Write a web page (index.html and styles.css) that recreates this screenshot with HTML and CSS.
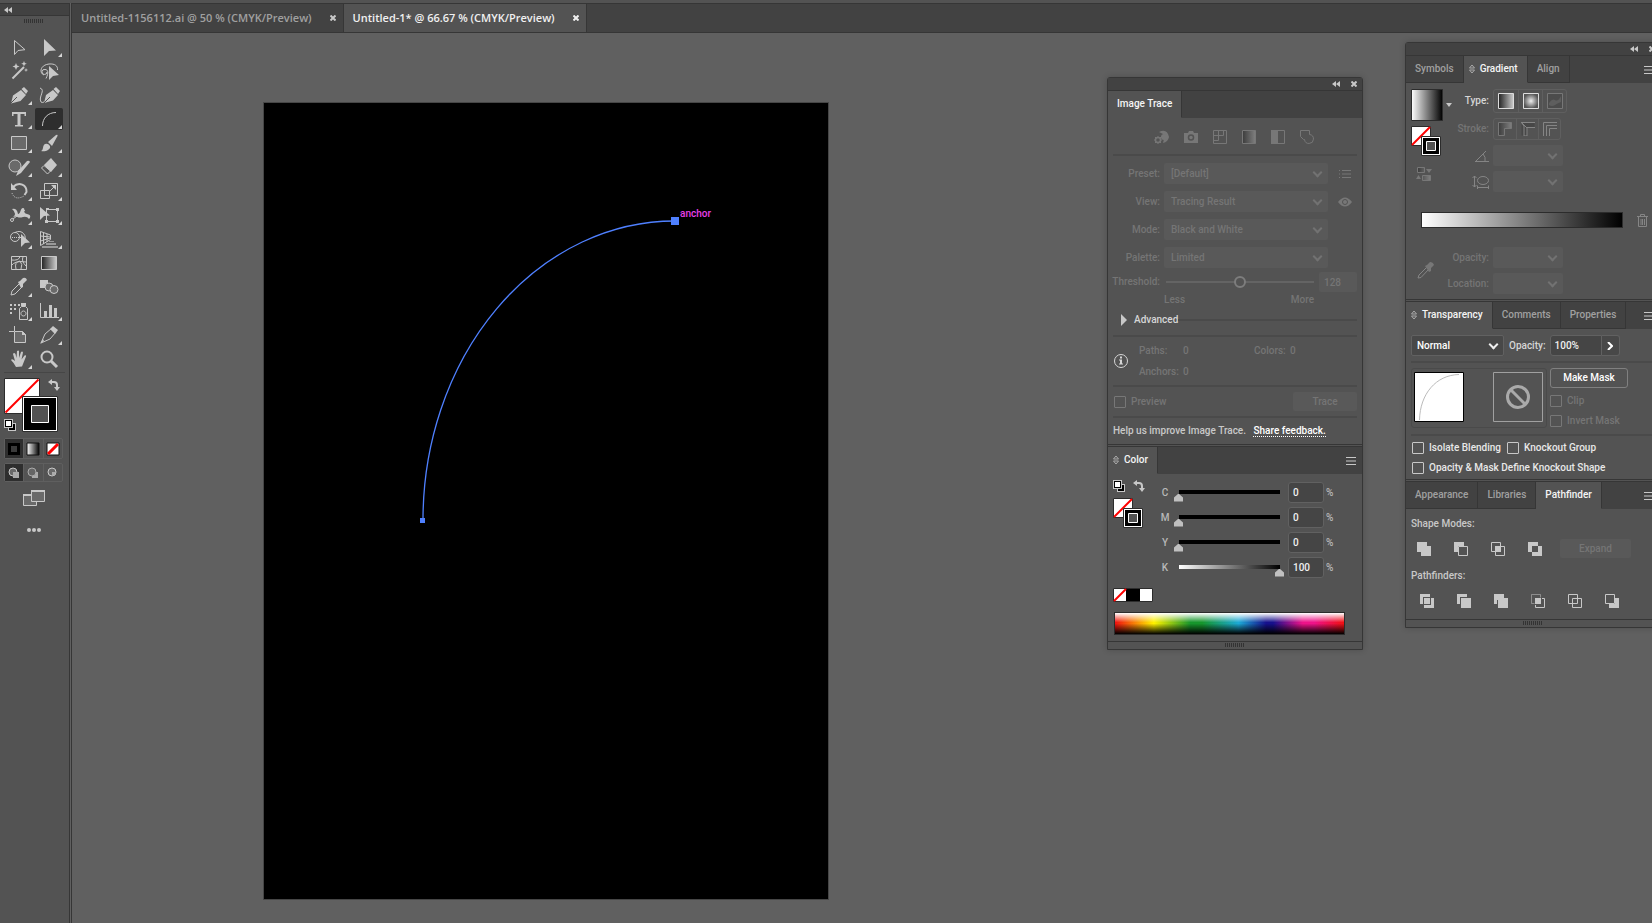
FILE: index.html
```html
<!DOCTYPE html>
<html lang="en">
<head>
<meta charset="UTF-8">
<title>Untitled-1</title>
<link rel="stylesheet" href="styles.css">
</head>
<body>
<svg class="defs" width="0" height="0" aria-hidden="true">
  <defs>
    <linearGradient id="dark-light"><stop offset="0" stop-color="#222"/><stop offset="1" stop-color="#ccc"/></linearGradient>
    <linearGradient id="light-dark"><stop offset="0" stop-color="#fff"/><stop offset="1" stop-color="#000"/></linearGradient>
    <linearGradient id="dim"><stop offset="0" stop-color="#3c3c3c"/><stop offset="1" stop-color="#808080"/></linearGradient>
    <radialGradient id="glow"><stop offset="0" stop-color="#eee"/><stop offset="1" stop-color="#555"/></radialGradient>
  </defs>
  <symbol id="collapse" viewBox="0 0 8 6"><path d="M4 0v6L0 3zM8 0v6L4 3z" fill="currentColor"/></symbol>
  <symbol id="close" viewBox="0 0 6 6"><path d="M.5.5l5 5M5.500.5l-5 5" stroke="currentColor" stroke-width="2"/></symbol>
  <symbol id="menu" viewBox="0 0 10 8"><path d="M0 .5h10M0 4h10M0 7.500h10" stroke="currentColor"/></symbol>
  <symbol id="updown" viewBox="0 0 6 10"><path d="M.5 4L3 1l2.500 3zM.5 6L3 9l2.500-3z" fill="none" stroke="currentColor"/></symbol>
  <symbol id="swap" viewBox="0 0 12 12"><path d="M3 3h3q3 0 3 3v3" fill="none" stroke="currentColor" stroke-width="2"/><path d="M0 3l4-3v6zM9 12l-3-4h6z" fill="currentColor"/></symbol>
  <symbol id="defaults" viewBox="0 0 12 12"><path d="M4 4h8v8H4z" fill="#c8c8c8"/><path d="M5 5h6v6H5z" fill="#000"/><path d="M7 7h2v2H7z" fill="#ccc"/><path d="M0 0h9v9H0z" fill="#c8c8c8"/><path d="M1 1h7v7H1z" fill="#000"/><path d="M2 2h5v5H2z" fill="#fff"/></symbol>
  <symbol id="fill-stroke" viewBox="0 0 30 30"><path d="M.5.5h19v19H.5z" fill="#fff" stroke="#2c2c2c"/><path d="M1 19L19 1" stroke="#f00" stroke-width="2"/><path d="M10.500 10.500h19v19h-19z" fill="#fff" stroke="#2c2c2c"/><path d="M12 12h16v16H12z" fill="#000"/><path d="M15.500 15.500h9v9h-9z" fill="#535353" stroke="#fff"/></symbol>
</svg>

<div class="app">
  <aside class="toolbar">
    <div class="toolbar-head"><svg width="8" height="6"><use href="#collapse"/></svg></div>
    <div class="grip"></div>
    <div class="tools">
      <button class="tool" aria-label="Selection"><svg viewBox="0 0 28 22"><path d="M9.500 4.500v14l3.500-4 7-.8z" class="line"/></svg></button>
      <button class="tool more" aria-label="Direct selection"><svg viewBox="0 0 28 22"><path d="M9 3v17l5-5 7-.5z"/></svg></button>
      <button class="tool" aria-label="Magic wand"><svg viewBox="0 0 28 22"><path d="M7.500 18.500L19 7" class="line wide"/><path d="M11 3l1 2.500 2.500 1L12 7.500l-1 2.500-1-2.500-2.500-1 2.500-1zM19 1l.8 2 2 .8-2 .8-.8 2-.8-2-2-.8 2-.8zM21 8l.6 1.500 1.500.5-1.500.6-.6 1.500-.6-1.500L19 10l1.500-.5z"/></svg></button>
      <button class="tool" aria-label="Lasso"><svg viewBox="0 0 28 22"><path d="M9 15C4 13 5 5 14 4c6-.5 9 2 8.500 6M12 12a2.500 2.500 0 1 1-2-2.500c3 0 4 3 1 9" class="line"/><path d="M14 6v14l4-4 6-1z"/></svg></button>
      <button class="tool more" aria-label="Pen"><svg viewBox="0 0 28 22"><path d="M6 19.500l2-8 8-5.500 5 5-5.500 6zM16.500 5L19 3l4 4-2 3z"/><path d="M6 19l6-6" stroke="#535353"/></svg></button>
      <button class="tool" aria-label="Curvature"><svg viewBox="0 0 28 22"><path d="M5 4c6 2-2 9 1 14q1 1 3 0" class="line"/><path d="M9 19l2-8 7-5 5 5-5 5.500zM18.500 5L21 3l4 4-2 3z"/><path d="M9 19l6-6" stroke="#535353"/></svg></button>
      <button class="tool more" aria-label="Type"><svg viewBox="0 0 28 22"><path d="M7 4h14v4h-1.500V6H15.500v11H18v1.500h-8V17h2.500V6H8.500v2H7z"/></svg></button>
      <button class="tool more selected" aria-label="Arc"><svg viewBox="0 0 28 22"><path d="M7.500 18C7.500 10 13 4.500 21 4.500" class="line"/></svg></button>
      <button class="tool more" aria-label="Rectangle"><svg viewBox="0 0 28 22"><path d="M6.500 4.500h15v13h-15z" class="line soft"/></svg></button>
      <button class="tool more" aria-label="Paintbrush"><svg viewBox="0 0 28 22"><path d="M13 10l8-7q2-1 1.500 1L17 14zM6 19c3-1 1-5 4-7q3-1 5 2c1 4-5 6-9 5z"/></svg></button>
      <button class="tool more" aria-label="Shaper"><svg viewBox="0 0 28 22"><circle cx="10" cy="10" r="6" class="line soft"/><path d="M11 20l2-5 9-10q2-1 3 1L16 17z"/></svg></button>
      <button class="tool more" aria-label="Eraser"><svg viewBox="0 0 28 22"><path d="M9 9l7-7 6 7-6 7z"/><path d="M9 9.500L6.500 12l6 6 3-3z" class="line"/></svg></button>
      <button class="tool more" aria-label="Rotate"><svg viewBox="0 0 28 22"><path d="M8 7c6-6 14-2 13.500 5l-2 3" class="line wide"/><path d="M6 3v7h6z"/><path d="M7 13q3 8 12 3" class="line dots"/></svg></button>
      <button class="tool more" aria-label="Scale"><svg viewBox="0 0 28 22"><path d="M9.500 3.500h13v12h-13zM5.500 10.500h9v8h-9zM15 11l5-5" class="line"/><path d="M16 5h5v5z"/></svg></button>
      <button class="tool more" aria-label="Width"><svg viewBox="0 0 28 22"><path d="M7 5q5-1 6 5c3 0 2-6 5-6s-1 5 4 6 3 4 2 5q-2-3-6-2c-7 2-5-3-11 1q6-4 0-9z"/><circle cx="7" cy="16" r="1.500" class="line"/><path d="M8 15l12-9" class="line"/></svg></button>
      <button class="tool more" aria-label="Free transform"><svg viewBox="0 0 28 22"><path d="M11.500 5.500h11v12h-11z" class="line"/><path d="M5 3v13l4-4 6-.5zM10 16h3v3h-3zM21 16h3v3h-3zM21 4h3v3h-3zM11 4h3v2h-3z"/></svg></button>
      <button class="tool more" aria-label="Shape builder"><svg viewBox="0 0 28 22"><circle cx="10" cy="9" r="4.500" class="line"/><path d="M10 4.500c7-4 13 4 9 9" class="line"/><path d="M7 9.500h9" class="line dots"/><path d="M16 6v13l4-4 5-.5z"/></svg></button>
      <button class="tool more" aria-label="Perspective grid"><svg viewBox="0 0 28 22"><path d="M5.500 3.500v14l10-6V7zM8.500 5v11M12 6v8M5.500 8l10 1M5.500 13l10-3" class="line"/><path d="M14 13h5v1h-5zM11 15h10v2H11zM7 18h16v2H7z" opacity=".6"/></svg></button>
      <button class="tool" aria-label="Mesh"><svg viewBox="0 0 28 22"><path d="M6.500 4.500h15v13h-15zM6 8q8 1 9-3.500M6 14q4-6 15-4M11 17q-2-7 4-8 3 3 1 8M18 5q-2 4 3 9" class="line"/></svg></button>
      <button class="tool" aria-label="Gradient"><svg viewBox="0 0 28 22"><path d="M6.500 4.500h15v13h-15z" fill="url(#dark-light)" stroke="#c8c8c8"/></svg></button>
      <button class="tool more" aria-label="Eyedropper"><svg viewBox="0 0 28 22"><path d="M14 8l-7 7-1 4 4-1 7-7" class="line"/><path d="M13 6l2-1 3-3q3-1 4 2l-4 4v3l-2 1z"/></svg></button>
      <button class="tool" aria-label="Blend"><svg viewBox="0 0 28 22"><path d="M5 4h8v8H5z"/><circle cx="14" cy="11" r="4" class="line soft"/><circle cx="19" cy="13.500" r="4" class="line soft"/></svg></button>
      <button class="tool more" aria-label="Symbol sprayer"><svg viewBox="0 0 28 22"><path d="M14.500 8.500l2-2h4l2 2v11h-8zM18.500 11a2.500 2.500 0 1 1-.1 0" class="line"/><path d="M16 3h5v3h-5zM5 4h2v2H5zM9 4h2v2H9zM13 4h2v2h-2zM5 8h2v2H5zM9 8h2v2H9zM5 12h2v2H5z"/></svg></button>
      <button class="tool more" aria-label="Column graph"><svg viewBox="0 0 28 22"><path d="M5.500 3v14.500H24" class="line"/><path d="M9 11h3v6H9zM14 5h3v12h-3zM19 8h3v9h-3z"/></svg></button>
      <button class="tool" aria-label="Artboard"><svg viewBox="0 0 28 22"><path d="M9.500 2v5M4 7.500h5M9.500 7.500h8l3 3v8h-11z" class="line soft"/><path d="M17 7v4h4z"/></svg></button>
      <button class="tool more" aria-label="Slice"><svg viewBox="0 0 28 22"><path d="M6 19l4-9 7-6 4 4-6 7z" class="line"/><path d="M15 5l3-3 5 4-3 4zM5 20l4-3-1-2z"/></svg></button>
      <button class="tool more" aria-label="Hand"><svg viewBox="0 0 28 22"><path d="M11 19q-2-4-5-7 1-2 4 1L8 6q1-2 2.500 0l1 4 .5-7q1.500-1 2 0v7l2-6q1.500-1 2 .5l-1.500 7 3-4q2-1 1.500 1l-4 10z"/></svg></button>
      <button class="tool" aria-label="Zoom"><svg viewBox="0 0 28 22"><circle cx="12" cy="9" r="5.500" class="line wide"/><path d="M16 13l6 6" class="line thick"/></svg></button>
    </div>
    <div class="paint">
      <svg width="60" height="54" viewBox="0 0 60 54">
        <path d="M.5.500h35v35H.5z" fill="#fff" stroke="#2c2c2c"/>
        <path d="M1.500 34.500l33-33" stroke="#f00" stroke-width="2"/>
        <path d="M18.500 18.500h35v35h-35z" fill="#fff" stroke="#2c2c2c"/>
        <path d="M20 20h32v32H20z" fill="#000"/>
        <path d="M27.500 27.500h17v17h-17z" fill="#535353" stroke="#fff"/>
        <use href="#swap" x="44" y="1" width="12" height="12"/>
        <use href="#defaults" x="0" y="41" width="12" height="12"/>
      </svg>
    </div>
    <div class="modes">
      <button class="on" aria-label="Color"><svg width="14" height="14"><path d="M1 1h12v12H1z" fill="#000"/><path d="M4 4h6v6H4z" fill="#3a3a3a"/></svg></button>
      <button aria-label="Gradient fill"><svg width="14" height="14"><path d="M1 1h12v12H1z" fill="url(#light-dark)" stroke="#111"/></svg></button>
      <button aria-label="None"><svg width="14" height="14"><path d="M1 1h12v12H1z" fill="#fff" stroke="#111"/><path d="M2 12L12 2" stroke="#f00" stroke-width="3"/></svg></button>
    </div>
    <div class="modes low">
      <button class="on" aria-label="Draw normal"><svg width="14" height="14"><circle cx="6" cy="6" r="4" class="line soft"/><path d="M6 6h6v6H6z"/></svg></button>
      <button aria-label="Draw behind"><svg width="14" height="14"><path d="M6 6h6v6H6z"/><circle cx="6" cy="6" r="4" fill="#666" stroke="#aaa"/></svg></button>
      <button aria-label="Draw inside"><svg width="14" height="14"><circle cx="6" cy="6" r="4" class="line soft"/><path d="M6 6h4l-1 3-3 1z"/></svg></button>
    </div>
    <button class="screen" aria-label="Screen mode"><svg width="22" height="16"><path d="M.5 4.500h13v11H.5z" class="line soft"/><path d="M8.500.5h13v11h-13z" class="line soft"/><path d="M0 4h8v2H0zM8 0h14v2H8z"/></svg></button>
    <button class="screen dots-btn" aria-label="Edit toolbar"><svg width="14" height="4"><circle cx="2" cy="2" r="2"/><circle cx="7" cy="2" r="2"/><circle cx="12" cy="2" r="2"/></svg></button>
  </aside>

  <main class="document">
    <div class="doc-tabs">
      <div class="doc-tab"><span>Untitled-1156112.ai @ 50 % (CMYK/Preview)</span><button aria-label="Close"><svg width="6" height="6"><use href="#close"/></svg></button></div>
      <div class="doc-tab active"><span>Untitled-1* @ 66.67 % (CMYK/Preview)</span><button aria-label="Close"><svg width="6" height="6"><use href="#close"/></svg></button></div>
    </div>
    <div class="canvas">
      <div class="artboard">
        <svg width="564" height="796" viewBox="0 0 564 796">
          <path d="M159 417A252 299 0 0 1 411 118" fill="none" stroke="#4f80ff" stroke-width="1.300"/>
          <path d="M156 415h5v5h-5zM407 114h8v8h-8z" fill="#4f80ff"/>
          <text x="416" y="114" class="hint">anchor</text>
        </svg>
      </div>
    </div>
  </main>

  <!-- Image Trace / Color -->
  <section class="window trace-window">
    <header class="window-head">
      <svg width="8" height="6"><use href="#collapse"/></svg>
      <svg width="6" height="6"><use href="#close"/></svg>
    </header>
    <div class="group">
      <div class="tabs"><button class="tab active">Image Trace</button></div>
      <div class="body trace">
        <div class="trace-icons">
          <svg viewBox="0 0 16 14"><path d="M5 2q8-4 10 5-1 5-6 6l1-4q3-3-1-5z"/><circle cx="10" cy="7" r="3"/><circle cx="4" cy="10" r="2.500" fill="#535353" stroke="#777" stroke-width="1.500"/><path d="M4 6v2M4 12v2M0 10h2M6 10h2M1 7l1 1M6 12l1 1M7 7L6 8M1 13l1-1" class="line"/></svg>
          <svg viewBox="0 0 16 14"><path d="M1 3h4l1-2h4l1 2h4v10H1z"/><circle cx="8" cy="7.500" r="2.500" fill="none" stroke="#535353" stroke-width="1.500"/></svg>
          <svg viewBox="0 0 16 14"><path d="M1.500.5h13v13h-13zM1.500 5.500h10v-5M6.500.5v10h-5" class="line"/></svg>
          <svg viewBox="0 0 16 14"><path d="M1.500.5h13v13h-13z" fill="url(#dim)" stroke="#777"/></svg>
          <svg viewBox="0 0 16 14"><path d="M1.500.5h13v13h-13z" class="line"/><path d="M1 0h7v14H1z"/></svg>
          <svg viewBox="0 0 16 14"><path d="M1.500.5h9v4a4.500 4.500 0 1 1-5 5h-1l-3-3z" class="line"/></svg>
        </div>
        <hr>
        <div class="field"><label for="preset">Preset:</label><span class="select"><select id="preset" disabled><option>[Default]</option></select></span><svg width="12" height="8"><path d="M3 .5h9M3 4h9M3 7.500h9M0 .5h1M0 4h1M0 7.500h1" class="line"/></svg></div>
        <div class="field"><label for="view">View:</label><span class="select"><select id="view" disabled><option>Tracing Result</option></select></span><svg width="14" height="10"><path d="M0 5q7-9 14 0-7 9-14 0z"/><circle cx="7" cy="5" r="2.500" fill="none" stroke="#535353"/></svg></div>
        <div class="field"><label for="mode">Mode:</label><span class="select"><select id="mode" disabled><option>Black and White</option></select></span></div>
        <div class="field"><label for="palette">Palette:</label><span class="select"><select id="palette" disabled><option>Limited</option></select></span></div>
        <div class="field threshold"><label for="threshold">Threshold:</label><input type="range" id="threshold" min="1" max="255" value="128" disabled><input type="text" class="num" value="128" aria-label="Threshold value" disabled></div>
        <div class="ends"><span>Less</span><span>More</span></div>
        <div class="advanced"><svg width="6" height="12"><path d="M0 0l6 6-6 6z"/></svg><span>Advanced</span><hr></div>
        <hr>
        <div class="info">
          <svg width="16" height="16"><circle cx="8" cy="8" r="6.500" class="line wide"/><path d="M7 3.500h2v2H7zM6 6.500h3v4h1v1H6v-1h1v-3H6z"/></svg>
          <dl>
            <dt>Paths:</dt><dd>0</dd><dt>Colors:</dt><dd>0</dd>
            <dt>Anchors:</dt><dd>0</dd>
          </dl>
        </div>
        <hr>
        <div class="preview"><label class="check off"><input type="checkbox" disabled>Preview</label><button class="flat" disabled>Trace</button></div>
        <hr>
        <p class="feedback">Help us improve Image Trace. <a href="#">Share feedback.</a></p>
      </div>
    </div>
    <div class="group">
      <div class="tabs"><button class="tab active"><svg width="6" height="10"><use href="#updown"/></svg>Color</button><svg class="menu" width="10" height="8"><use href="#menu"/></svg></div>
      <div class="body color">
        <div class="mix">
          <div class="chips">
            <div class="chip-row"><svg width="12" height="12"><use href="#defaults"/></svg><svg width="12" height="12"><use href="#swap"/></svg></div>
            <svg width="30" height="30"><use href="#fill-stroke"/></svg>
          </div>
          <div class="channels">
            <div class="channel"><label for="c">C</label><input type="range" id="c" value="0"><input type="text" value="0" aria-label="Cyan"><span>%</span></div>
            <div class="channel"><label for="m">M</label><input type="range" id="m" value="0"><input type="text" value="0" aria-label="Magenta"><span>%</span></div>
            <div class="channel"><label for="y">Y</label><input type="range" id="y" value="0"><input type="text" value="0" aria-label="Yellow"><span>%</span></div>
            <div class="channel"><label for="k">K</label><input type="range" id="k" class="fade" value="100"><input type="text" value="100" aria-label="Black"><span>%</span></div>
          </div>
        </div>
        <svg class="swatches" width="40" height="14"><path d="M.5.5h39v13H.5z" fill="#fff" stroke="#2c2c2c"/><path d="M13 1h14v12H13z" fill="#000"/><path d="M1 13L13 1" stroke="#f00" stroke-width="2"/></svg>
        <div class="spectrum"></div>
      </div>
    </div>
    <footer class="window-foot"><div class="grip"></div></footer>
  </section>

  <!-- Gradient / Transparency / Pathfinder -->
  <section class="window dock">
    <header class="window-head">
      <svg width="8" height="6"><use href="#collapse"/></svg>
      <svg width="6" height="6"><use href="#close"/></svg>
    </header>
    <div class="group">
      <div class="tabs"><button class="tab">Symbols</button><button class="tab active"><svg width="6" height="10"><use href="#updown"/></svg>Gradient</button><button class="tab">Align</button><svg class="menu" width="10" height="8"><use href="#menu"/></svg></div>
      <div class="body gradient">
        <div class="gradient-top">
          <div class="gradient-chips">
            <div class="chip-row"><svg width="32" height="32"><path d="M.5.5h31v31H.5z" fill="url(#light-dark)" stroke="#2c2c2c"/></svg><svg width="6" height="4"><path d="M0 0h6L3 4z"/></svg></div>
            <svg width="30" height="30"><use href="#fill-stroke"/></svg>
            <svg class="reverse" width="16" height="14"><path d="M1.500.5h7v5h-7zM6.500 8.500h8v5h-8z" fill="url(#dim)" stroke="#777"/><path d="M10 2h6l-3 4zM0 12h5L2.500 8z"/></svg>
          </div>
          <div class="options">
            <div class="option"><span>Type:</span><div class="segments">
              <button aria-label="Linear"><svg width="16" height="16"><path d="M.5.5h15v15H.5z" fill="url(#dark-light)" stroke="#ddd"/></svg></button>
              <button aria-label="Radial"><svg width="16" height="16"><path d="M.5.5h15v15H.5z" fill="url(#glow)" stroke="#ddd"/></svg></button>
              <button aria-label="Freeform"><svg width="16" height="16"><path d="M.5.5h15v15H.5z" fill="#4c4c4c" stroke="#777"/><path d="M2 10q3-5 6-3t6-4v6q-3 1-6 3t-6 0z" fill="#5e5e5e"/></svg></button>
            </div></div>
            <div class="option off"><span>Stroke:</span><div class="segments small">
              <button aria-label="Within stroke" disabled><svg width="14" height="14"><path d="M.5.5h13v6h-7v7h-6z" fill="url(#dim)" stroke="#777"/></svg></button>
              <button aria-label="Along stroke" disabled><svg width="14" height="14"><path d="M.5.5h13v5h-7v8h-6z" fill="#474747"/><path d="M0 .5h14M0 0l6 6v8H3V4zM6 5.500h8" class="line"/></svg></button>
              <button aria-label="Across stroke" disabled><svg width="14" height="14"><path d="M.5 14V.5H14M3.500 14V3.500H14M6.500 14V6.500H14" class="line"/></svg></button>
            </div></div>
            <div class="option off"><label for="angle" aria-label="Angle"><svg width="14" height="12"><path d="M0 11.500h14M1 11L11 1M8 4q3 3 2 7" class="line"/></svg></label><span class="select"><select id="angle" disabled><option></option></select></span></div>
            <div class="option off"><label for="aspect" aria-label="Aspect ratio"><svg width="17" height="14"><ellipse cx="11" cy="5.500" rx="5.500" ry="4" class="line"/><path d="M2.500 1v11M.5 3l2-2 2 2M.5 10l2 2 2-2M5.500 12.500h11M5.500 10.500v3.500M16.500 10.500v3.500" class="line"/></svg></label><span class="select"><select id="aspect" disabled><option></option></select></span></div>
          </div>
        </div>
        <div class="ramp"><div class="ramp-bar"></div><svg width="11" height="13"><path d="M0 2.500h11M3.500 2V.5h4V2M1.500 3v9.500h8V3M4 5v6M5.500 5v6M7.500 5v6" class="line"/></svg></div>
        <div class="stop">
          <svg width="17" height="17"><path d="M10 5l-8 8-1 3 3-.5L12 7" class="line"/><path d="M8 4l2-1 3-3q3 0 4 3l-3 3v3l-2 1z"/></svg>
          <div class="options">
            <div class="option off"><label for="stop-opacity">Opacity:</label><span class="select"><select id="stop-opacity" disabled><option></option></select></span></div>
            <div class="option off"><label for="location">Location:</label><span class="select"><select id="location" disabled><option></option></select></span></div>
          </div>
        </div>
      </div>
    </div>
    <div class="group">
      <div class="tabs"><button class="tab active"><svg width="6" height="10"><use href="#updown"/></svg>Transparency</button><button class="tab">Comments</button><button class="tab">Properties</button><svg class="menu" width="10" height="8"><use href="#menu"/></svg></div>
      <div class="body transparency">
        <div class="blend">
          <span class="select boxed"><select aria-label="Blend mode"><option>Normal</option></select></span>
          <label for="opacity">Opacity:</label>
          <div class="stepper"><input type="text" id="opacity" value="100%"><button aria-label="More opacity"><svg width="6" height="8"><path d="M1 0l4 4-4 4" fill="none" stroke="#fff" stroke-width="2"/></svg></button></div>
        </div>
        <hr>
        <div class="mask">
          <div class="thumbs">
            <svg width="50" height="50"><path d="M.5.5h49v49H.5z" fill="#fff" stroke="#000"/><path d="M5.500 48C6 22 22 3 45 2.500" fill="none" stroke="#bbb"/></svg>
            <svg width="50" height="50"><path d="M.5.5h49v49H.5z" fill="none" stroke="#a0a0a0"/><circle cx="25" cy="25" r="10.500" fill="none" stroke="#aaa" stroke-width="3"/><path d="M18 18l14 14" stroke="#aaa" stroke-width="3"/></svg>
          </div>
          <div class="mask-options">
            <button class="outline">Make Mask</button>
            <label class="check off"><input type="checkbox" disabled>Clip</label>
            <label class="check off"><input type="checkbox" disabled>Invert Mask</label>
          </div>
        </div>
        <hr>
        <div class="knockout">
          <div><label class="check"><input type="checkbox">Isolate Blending</label><label class="check"><input type="checkbox">Knockout Group</label></div>
          <div><label class="check"><input type="checkbox">Opacity &amp; Mask Define Knockout Shape</label></div>
        </div>
      </div>
    </div>
    <div class="group">
      <div class="tabs"><button class="tab">Appearance</button><button class="tab">Libraries</button><button class="tab active">Pathfinder</button><svg class="menu" width="10" height="8"><use href="#menu"/></svg></div>
      <div class="body pathfinder">
        <h3>Shape Modes:</h3>
        <div class="shapes">
          <button aria-label="Unite"><svg width="14" height="14"><path d="M0 0h10v4h4v10H4v-4H0z"/></svg></button>
          <button aria-label="Minus front"><svg width="14" height="14"><path d="M0 0h10v4H4v6H0z"/><path d="M4.500 4.500h9v9h-9z" class="line"/></svg></button>
          <button aria-label="Intersect"><svg width="14" height="14"><path d="M.5.5h9v9h-9zM4.500 4.500h9v9h-9z" class="line"/><path d="M4 4h6v6H4z"/></svg></button>
          <button aria-label="Exclude"><svg width="14" height="14"><path d="M0 0h10v4h4v10H4v-4H0zM4 4v6h6V4z" fill-rule="evenodd"/></svg></button>
          <button class="flat" disabled>Expand</button>
        </div>
        <h3>Pathfinders:</h3>
        <div class="finders">
          <button aria-label="Divide"><svg width="14" height="14"><path d="M0 0h10v3H3v7H0zM11 4h3v10H4v-3h7zM4 4h6v6H4z"/></svg></button>
          <button aria-label="Trim"><svg width="14" height="14"><path d="M0 0h10v3H3v7H0zM4 4h10v10H4z"/></svg></button>
          <button aria-label="Merge"><svg width="14" height="14"><path d="M0 0h10v4h4v10H4V6H3v4H0z"/></svg></button>
          <button aria-label="Crop"><svg width="14" height="14"><path d="M.5.5h9v3M.5.5v9h3" class="line" opacity=".5"/><path d="M4 4h6v6H4z"/><path d="M11 4.500h2.500v9h-9V11" class="line"/></svg></button>
          <button aria-label="Outline"><svg width="14" height="14"><path d="M.5.5h9v9h-9zM4.500 4.500h9v9h-9z" class="line"/></svg></button>
          <button aria-label="Minus back"><svg width="14" height="14"><path d="M.5.5h9v9h-9z" class="line"/><path d="M10 4h4v10H4v-4h6z"/></svg></button>
        </div>
      </div>
    </div>
    <footer class="window-foot"><div class="grip"></div></footer>
  </section>
</div>
</body>
</html>
```
FILE: styles.css
```css
* {
  box-sizing: border-box;
}

body {
  margin: 0;
  font: 500 10px/14px Roboto, "Noto Sans", sans-serif;
  color: #d6d6d6;
  background-color: #606060;
}

button, input, select {
  font: inherit;
  color: inherit;
  margin: 0;
  padding: 0;
  border: 0;
  background: none;
}

button {
  display: flex;
  align-items: center;
  justify-content: center;
}

svg {
  display: block;
  flex: none;
  fill: #c8c8c8;
  color: #c8c8c8;
}

hr {
  margin: 0;
  border: 0;
  height: 2px;
  background-color: #4a4a4a;
}

.defs {
  position: absolute;
}

.line {
  fill: none;
  stroke: #c8c8c8;
}

.soft {
  fill: #6a6a6a;
}

.wide {
  stroke-width: 2;
}

.thick {
  stroke-width: 3;
}

.dots {
  stroke-dasharray: 1 1;
}

.app {
  position: relative;
  display: flex;
  min-height: 100vh;
  overflow: hidden;
  border-top: 3px solid #535353;
}

.grip {
  width: 20px;
  height: 4px;
  background: repeating-linear-gradient(90deg, #333 0, #333 1px, transparent 1px, transparent 2px);
}

/* toolbar */
.toolbar {
  flex: none;
  width: 70px;
  display: flex;
  flex-direction: column;
  background-color: #535353;
  border-top: 1px solid #363636;
  border-right: 1px solid #363636;
}

.toolbar-head {
  height: 12px;
  padding: 3px 4px;
  background-color: #424242;
  border-bottom: 1px solid #363636;
}

.toolbar .grip {
  margin: 3px 24px 13px;
}

.tools {
  display: grid;
  grid-template-columns: 28px 28px;
  gap: 2px;
  padding: 0 5px 2px;
}

.tool {
  position: relative;
  height: 22px;
  border-radius: 2px;
}

.tool svg {
  width: 28px;
  height: 22px;
}

.more::after {
  content: "";
  position: absolute;
  right: 1px;
  bottom: 1px;
  border: 2px solid #d6d6d6;
  border-top-color: transparent;
  border-left-color: transparent;
}

.selected {
  background-color: #2e2e2e;
}

.paint {
  margin: 0 4px;
  padding: 5px 0 6px;
  border-top: 1px solid #464646;
}

.modes {
  display: flex;
  margin: 0 6px 4px 4px;
  border: 1px solid #5f5f5f;
  border-radius: 2px;
}

.modes button {
  flex: 1;
  height: 19px;
}

.modes button + button {
  border-left: 1px solid #5f5f5f;
}

.modes .on {
  background-color: #2e2e2e;
}

.low button {
  height: 17px;
}

.low svg {
  fill: #aaa;
}

.screen {
  height: 16px;
  margin: 4px 2px 0 0;
}

.dots-btn {
  margin-top: 16px;
}

/* document */
.document {
  flex: 1;
  margin-left: 1px;
  border-left: 1px solid #363636;
  display: flex;
  flex-direction: column;
}

.doc-tabs {
  display: flex;
  height: 30px;
  background-color: #424242;
  border-top: 1px solid #363636;
  border-bottom: 1px solid #363636;
}

.doc-tab {
  display: flex;
  align-items: center;
  justify-content: space-between;
  gap: 18px;
  padding: 0 7px 0 9px;
  border-right: 1px solid #363636;
  font-family: "Open Sans", "Noto Sans", sans-serif;
  font-size: 11px;
  font-weight: 600;
  color: #a0a0a0;
}

.doc-tab.active {
  background-color: #535353;
  color: #f0f0f0;
}

.doc-tab.active svg {
  color: #f0f0f0;
}

.canvas {
  flex: 1;
  padding: 70px 0 24px 192px;
}

.artboard {
  width: 564px;
  background-color: #000;
  outline: 1px solid #464646;
}

.hint {
  fill: #e83fe8;
}

/* floating windows */
.window {
  position: absolute;
  width: 256px;
  background-color: #535353;
  border: 1px solid #363636;
  border-radius: 3px 3px 0 0;
  box-shadow: 0 0 6px rgba(0, 0, 0, 0.2);
}

.trace-window {
  top: 74px;
  right: 289px;
}

.dock {
  top: 39px;
  right: -9px;
}

.window-head {
  display: flex;
  align-items: center;
  justify-content: flex-end;
  gap: 11px;
  height: 13px;
  padding-right: 5px;
  background-color: #424242;
  border-bottom: 1px solid #363636;
}

.window-foot {
  display: flex;
  justify-content: center;
  padding: 1px 0 2px;
}

.group {
  border-bottom: 1px solid #363636;
}

.group + .group {
  margin-top: 1px;
  border-top: 1px solid #363636;
}

.tabs {
  display: flex;
  height: 27px;
  background-color: #424242;
}

.tab {
  gap: 5px;
  padding: 0 9px;
  border-right: 1px solid #363636;
  border-bottom: 1px solid #363636;
  color: #a0a0a0;
}

.tab.active {
  background-color: #535353;
  border-bottom-color: #535353;
  color: #f5f5f5;
}

.tab:has(svg) {
  padding-left: 5px;
}

.tab svg {
  color: #aaa;
}

.tabs .menu {
  align-self: center;
  margin-left: auto;
  margin-right: 6px;
}

/* form parts */
.select {
  position: relative;
  display: block;
}

.select::after {
  content: "";
  position: absolute;
  top: 6px;
  right: 7px;
  width: 5px;
  height: 5px;
  border: solid #727272;
  border-width: 0 2px 2px 0;
  transform: rotate(45deg);
}

select {
  display: block;
  appearance: none;
  width: 100%;
  height: 21px;
  padding-left: 7px;
  border-radius: 2px;
  background-color: #595959;
  opacity: 1;
}

select:disabled, input:disabled, button:disabled {
  color: #757575;
}

.flat {
  background-color: #595959;
  border-radius: 2px;
}

.check {
  display: flex;
  align-items: center;
  gap: 5px;
  color: #e8e8e8;
}

.check input {
  appearance: none;
  width: 12px;
  height: 12px;
  border: 1px solid #c8c8c8;
  border-radius: 1px;
}

.off {
  color: #757575;
}

.check.off input {
  border-color: #777;
}

/* image trace */
.trace {
  padding: 12px 5px 6px;
  color: #757575;
}

.trace-icons {
  display: flex;
  justify-content: center;
  gap: 13px;
  padding-right: 2px;
  margin-bottom: 10px;
}

.trace-icons svg {
  width: 16px;
  height: 14px;
}

.trace svg {
  fill: #777;
}

.trace .line {
  stroke: #777;
}

.field {
  display: grid;
  grid-template-columns: 47px 164px 1fr;
  column-gap: 4px;
  align-items: center;
  justify-items: center;
  margin-top: 7px;
}

.field label {
  justify-self: end;
}

.field .select {
  width: 100%;
}

.threshold {
  grid-template-columns: 47px 150px 38px;
  justify-content: space-between;
  column-gap: 0;
  margin-top: 4px;
}

.threshold input[type="range"] {
  appearance: none;
  width: 148px;
  height: 12px;
  background: linear-gradient(#646464, #646464) center / 100% 2px no-repeat;
}

.threshold input::-webkit-slider-thumb {
  appearance: none;
  width: 12px;
  height: 12px;
  border: 2px solid #7d7d7d;
  border-radius: 50%;
  background-color: #535353;
}

.num {
  width: 38px;
  height: 20px;
  padding-left: 5px;
  border-radius: 2px;
  background-color: #595959;
}

.ends {
  display: flex;
  justify-content: space-between;
  padding: 1px 43px 0 51px;
}

.advanced {
  display: flex;
  align-items: center;
  margin: 6px 0 8px 8px;
  color: #d6d6d6;
}

.advanced svg {
  margin-right: 7px;
  fill: #c8c8c8;
}

.advanced hr {
  flex: 1;
}

.info {
  display: flex;
  align-items: center;
  height: 48px;
}

.trace .info svg {
  fill: #d6d6d6;
}

.info .line {
  stroke: #d6d6d6;
  fill: none;
  stroke-width: 1;
}

.info dl {
  display: grid;
  grid-template-columns: 44px 71px 36px 20px;
  row-gap: 7px;
  margin: 0 0 0 10px;
}

.info dd {
  margin: 0;
}

.preview {
  display: flex;
  justify-content: space-between;
  padding: 5px 0 5px 1px;
}

.preview .flat {
  width: 64px;
  height: 19px;
}

.feedback {
  margin: 6px 0 0;
  color: #c8c8c8;
}

.feedback a {
  margin-left: 5px;
  color: #fff;
  text-decoration: none;
  border-bottom: 1px dotted #fff;
}

/* color */
.color {
  padding: 6px 5px;
}

.mix {
  display: flex;
}

.chips {
  width: 45px;
}

.chip-row {
  display: flex;
  align-items: center;
  gap: 8px;
  margin-bottom: 6px;
}

.channels {
  display: grid;
  gap: 4px;
  margin-top: 2px;
}

.channel {
  display: grid;
  grid-template-columns: 14px 112px 36px 12px;
  column-gap: 2px;
  align-items: center;
  height: 21px;
  color: #b8b8b8;
}

.channel label {
  text-align: center;
}

.channel input[type="range"] {
  appearance: none;
  width: 110px;
  height: 12px;
  margin-top: 6px;
  background: linear-gradient(90deg, #000, #000) 5px 0 / 101px 4px no-repeat;
}

.channel input.fade {
  background-image: linear-gradient(90deg, #fff, #000);
}

.channel input::-webkit-slider-thumb {
  appearance: none;
  width: 9px;
  height: 8px;
  margin-top: 4px;
  background-color: #c0c0c0;
  clip-path: polygon(50% 0, 100% 50%, 100% 100%, 0 100%, 0 50%);
}

.channel input[type="text"], .stepper input {
  width: 36px;
  height: 21px;
  padding-left: 4px;
  background-color: #454545;
  border: 1px solid #616161;
  border-radius: 3px;
  color: #f0f0f0;
}

.swatches {
  margin: 10px 0;
}

.spectrum {
  height: 23px;
  margin: 0 12px 0 1px;
  border: 1px solid #2c2c2c;
  background:
    linear-gradient(#fff, transparent 45%, transparent 50%, #000),
    linear-gradient(90deg, #f01010, #fff200 17%, #16962c 33%, #16962c 38%, #1ca9d6 54%, #16108c 66%, #16108c 69%, #ee1289 82%, #ee1289 87%, #f01010);
}

/* gradient */
.gradient {
  padding: 6px 12px 5px 5px;
}

.gradient-top {
  display: flex;
}

.gradient-chips {
  width: 52px;
}

.gradient-chips .chip-row {
  gap: 3px;
  margin-bottom: 5px;
}

.gradient .off svg, .gradient .reverse, .ramp svg, .stop svg {
  fill: #777;
}

.gradient .off .line, .ramp .line, .stop .line {
  stroke: #858585;
}

.reverse {
  margin: 11px 0 0 5px;
}

.options {
  display: grid;
  gap: 5px;
}

.option {
  display: grid;
  grid-template-columns: 26px 70px;
  column-gap: 4px;
  align-items: center;
}

.option > :first-child {
  justify-self: end;
}

.segments {
  display: flex;
  width: max-content;
  border: 1px solid #5f5f5f;
  border-radius: 3px;
}

.segments button {
  width: 24px;
  height: 22px;
}

.segments button + button {
  border-left: 1px solid #5f5f5f;
}

.segments.small button {
  width: 22px;
  height: 20px;
}

.ramp {
  display: flex;
  align-items: center;
  justify-content: space-between;
  margin: 20px 0 19px 10px;
}

.ramp-bar {
  width: 202px;
  height: 16px;
  border: 1px solid #2c2c2c;
  background: linear-gradient(90deg, #fff, #000);
}

.stop {
  display: flex;
  align-items: center;
  padding-left: 6px;
}

.stop .option {
  grid-template-columns: 55px 70px;
}

/* transparency */
.transparency {
  padding: 6px 5px 3px;
}

.blend {
  display: flex;
  align-items: center;
  gap: 4px;
  margin-bottom: 5px;
}

.boxed {
  width: 93px;
  margin-right: 1px;
}

.boxed select {
  padding-left: 5px;
  background-color: #484848;
  border: 1px solid #616161;
  color: #fff;
}

.boxed::after {
  border-color: #f0f0f0;
}

.stepper {
  display: flex;
}

.stepper input {
  width: 52px;
  border-radius: 3px 0 0 3px;
}

.stepper button {
  width: 18px;
  border: 1px solid #616161;
  border-left: 0;
  border-radius: 0 3px 3px 0;
  background-color: #484848;
}

.mask {
  display: flex;
  gap: 3px;
  margin: 5px 0 6px;
}

.thumbs {
  display: flex;
  gap: 29px;
  width: 136px;
  padding: 3px 2px;
  border: 1px solid #4a4a4a;
  border-radius: 3px;
}

.mask-options {
  display: grid;
  align-content: start;
  gap: 6px;
}

.outline {
  width: 78px;
  height: 20px;
  border: 1px solid #808080;
  border-radius: 3px;
  color: #fff;
}

.knockout {
  display: grid;
  gap: 6px;
  padding: 5px 0 1px 1px;
}

.knockout div {
  display: flex;
  gap: 6px;
}

/* pathfinder */
.pathfinder {
  padding: 8px 5px 9px;
}

.pathfinder h3 {
  margin: 0;
  font: inherit;
  color: #c8c8c8;
}

.shapes, .finders {
  display: flex;
  align-items: center;
  gap: 23px;
  padding: 8px 0 11px 6px;
}

.finders {
  padding: 11px 0 2px 9px;
}

.shapes .flat {
  width: 71px;
  height: 19px;
  margin-left: -5px;
}
```
